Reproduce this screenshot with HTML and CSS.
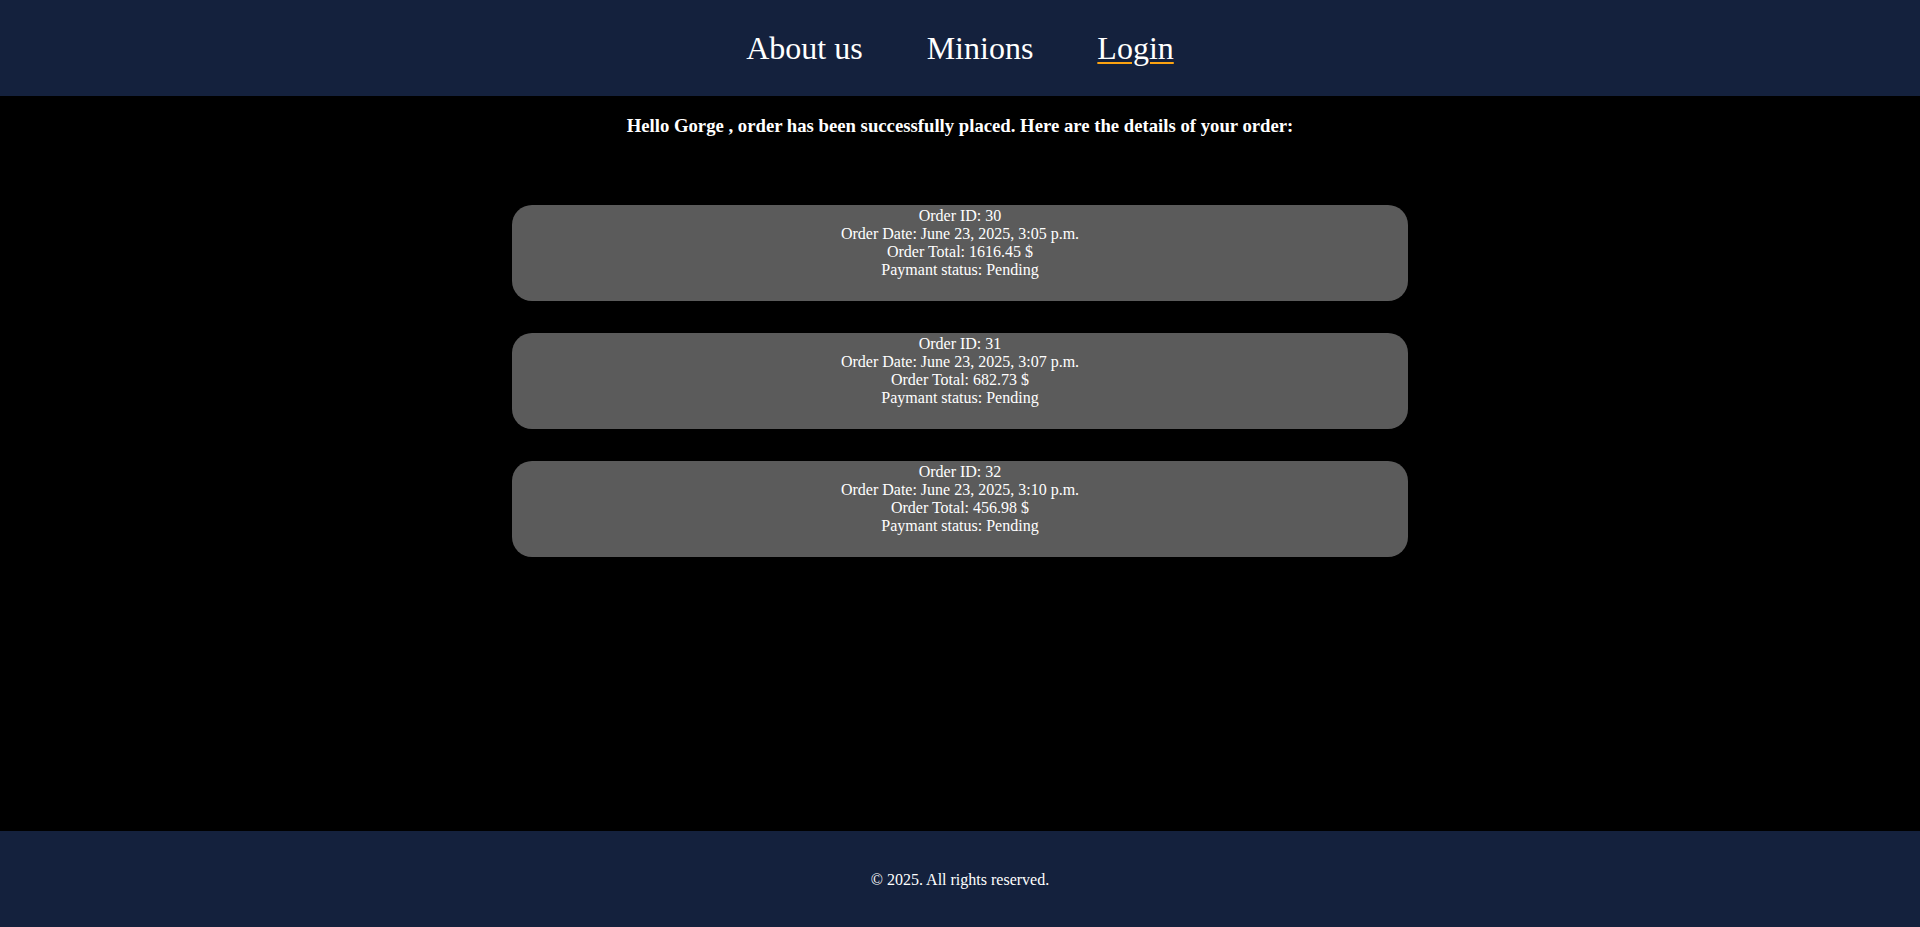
FILE: index.html
```html
<!DOCTYPE html>
<html lang="en">
<head>
<meta charset="utf-8">
<title>Order placed</title>
<link rel="stylesheet" href="styles.css">
</head>
<body>
<header class="site-header">
  <nav class="nav">
    <a class="nav-link" href="#">About us</a>
    <a class="nav-link" href="#">Minions</a>
    <a class="nav-link nav-link-active" href="#">Login</a>
  </nav>
</header>
<main class="main">
  <h3 class="greeting">Hello Gorge , order has been successfully placed. Here are the details of your order:</h3>
  <div class="orders">
    <div class="order-card">
      <div>Order ID: 30</div>
      <div>Order Date: June 23, 2025, 3:05 p.m.</div>
      <div>Order Total: 1616.45 $</div>
      <div>Paymant status: Pending</div>
    </div>
    <div class="order-card">
      <div>Order ID: 31</div>
      <div>Order Date: June 23, 2025, 3:07 p.m.</div>
      <div>Order Total: 682.73 $</div>
      <div>Paymant status: Pending</div>
    </div>
    <div class="order-card">
      <div>Order ID: 32</div>
      <div>Order Date: June 23, 2025, 3:10 p.m.</div>
      <div>Order Total: 456.98 $</div>
      <div>Paymant status: Pending</div>
    </div>
  </div>
</main>
<footer class="site-footer">
  <p class="copyright">&copy; 2025. All rights reserved.</p>
</footer>
</body>
</html>
```

FILE: styles.css
```css
html, body {
  margin: 0;
  padding: 0;
}
body {
  min-height: 100vh;
  display: flex;
  flex-direction: column;
  background: #000000;
  color: #ffffff;
  font-family: "Liberation Serif", "Times New Roman", serif;
  font-size: 16px;
}
.site-header {
  height: 96px;
  background: #14213d;
  display: flex;
  align-items: center;
  justify-content: center;
}
.nav {
  display: flex;
  gap: 64px;
}
.nav-link {
  color: #ffffff;
  font-size: 32px;
  text-decoration: none;
}
.nav-link-active {
  text-decoration: underline;
  text-decoration-color: #fca311;
  text-decoration-thickness: 2px;
  text-underline-offset: 3px;
}
.main {
  flex: 1;
  display: flex;
  flex-direction: column;
  align-items: center;
}
.greeting {
  margin: 18.72px 0 0;
  font-size: 18.72px;
  font-weight: bold;
  text-align: center;
}
.orders {
  display: flex;
  flex-direction: column;
  gap: 32px;
  padding-top: 68px;
}
.order-card {
  width: 896px;
  height: 96px;
  box-sizing: border-box;
  background: #5b5b5b;
  border-radius: 20px;
  text-align: center;
  line-height: 18px;
  padding-top: 2px;
}
.site-footer {
  height: 96px;
  background: #14213d;
  display: flex;
  align-items: center;
  justify-content: center;
}
.copyright {
  margin: 0;
  padding-top: 2px;
  font-size: 16px;
}
```
